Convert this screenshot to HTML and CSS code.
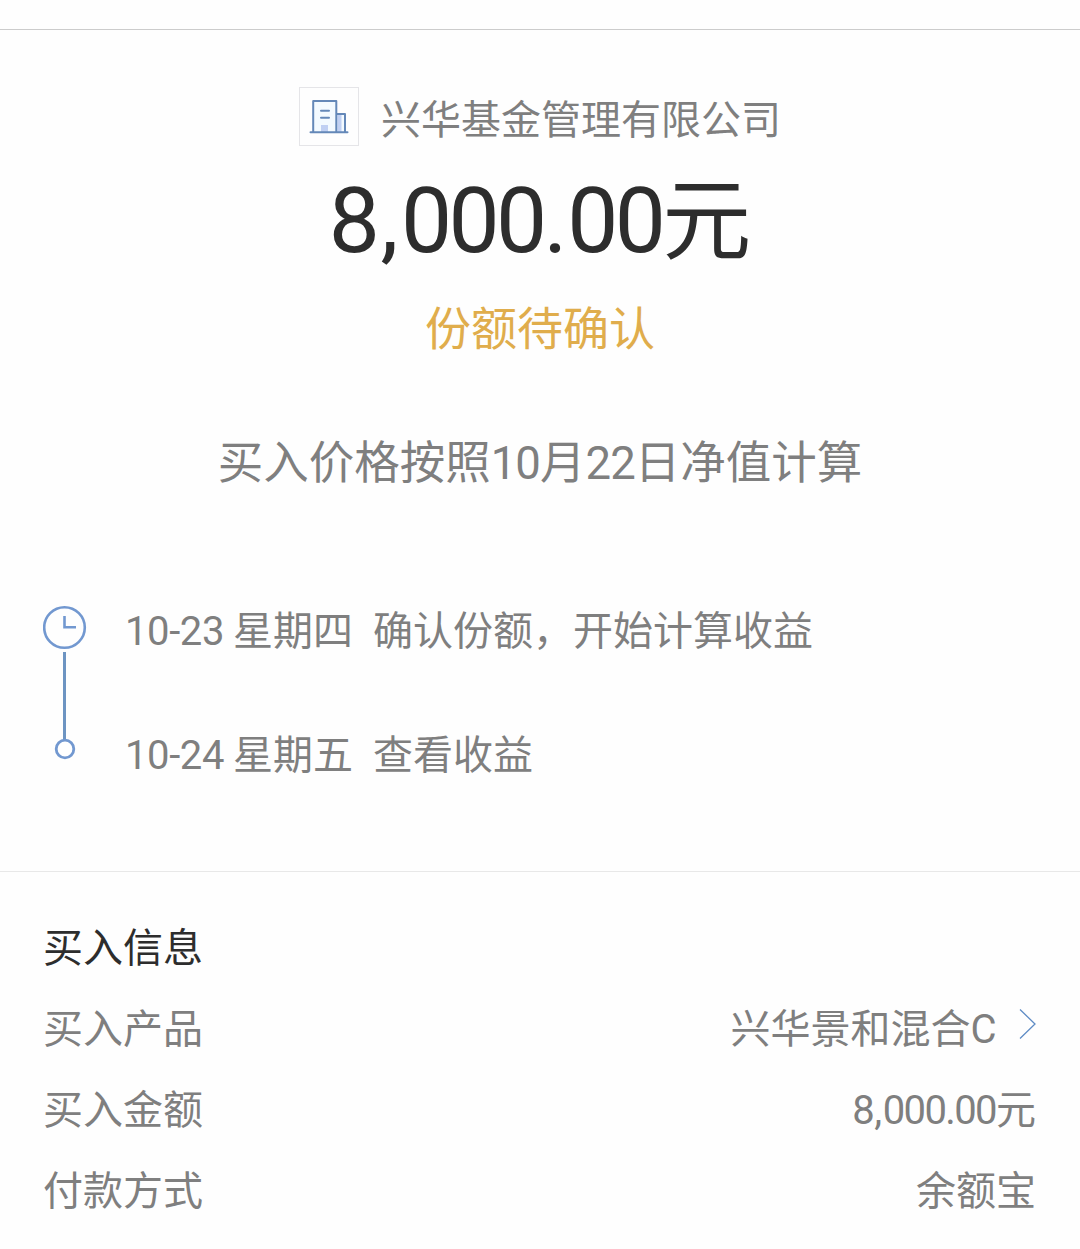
FILE: index.html
```html
<!DOCTYPE html>
<html lang="zh-CN">
<head>
    <meta charset="UTF-8">
    <meta name="viewport" content="width=device-width, initial-scale=1.0">
    <title>买入详情</title>
    <link rel="stylesheet" href="styles.css">
</head>
<body>
    <main class="page">
        <section class="summary">
            <div class="company">
                <span class="company-logo">
                    <svg width="40" height="36" viewBox="0 0 40 36">
                        <path d="M4 2h23v32H4zM27 15h9v19h-9z" fill="#f3faff"/>
                        <path d="M12 26h7v7h-7zM28.500 16h4v17h-4z" fill="#c0d0f3"/>
                        <path d="M4.200 33V2H27.300V33M27.300 15H36V33" fill="none" stroke="#6488b8" stroke-width="2" stroke-linejoin="round"/>
                        <path d="M1.500 33.300H38.500M12 11.800H20M12 18.800H20" stroke="#6488b8" stroke-width="2" stroke-linecap="round"/>
                    </svg>
                </span>
                <span class="company-name">兴华基金管理有限公司</span>
            </div>
            <h1 class="amount"><span class="num">8<span class="comma">,</span>000<span class="dot">.</span>00</span>元</h1>
            <p class="status">份额待确认</p>
            <p class="note">买入价格按照<span class="num">10</span>月<span class="num">22</span>日净值计算</p>
        </section>

        <section class="progress">
            <svg class="progress-line" width="44" height="156" viewBox="0 0 44 156">
                <circle cx="21.500" cy="22.500" r="20.300" fill="none" stroke="#7298d0" stroke-width="2.600"/>
                <path d="M21.500 11V22.300H33" fill="none" stroke="#7298d0" stroke-width="2.600"/>
                <path d="M21.500 47V135" stroke="#6d94c2" stroke-width="3"/>
                <circle cx="22" cy="144" r="8.800" fill="#fff" stroke="#7298d0" stroke-width="2.800"/>
            </svg>
            <ul class="steps">
                <li>
                    <span class="date"><span class="num">10-23</span> 星期四</span>
                    <span>确认份额，开始计算收益</span>
                </li>
                <li>
                    <span class="date"><span class="num">10-24</span> 星期五</span>
                    <span>查看收益</span>
                </li>
            </ul>
        </section>

        <section class="info">
            <h2>买入信息</h2>
            <div class="row">
                <span>买入产品</span>
                <a class="product">
                    <span>兴华景和混合<span class="num">C</span></span>
                    <svg class="arrow" width="18" height="32" viewBox="0 0 18 32">
                        <path d="M2 1.500L17 16L2 30.500" fill="none" stroke="#5f8cc5" stroke-width="1.300"/>
                    </svg>
                </a>
            </div>
            <div class="row">
                <span>买入金额</span>
                <span><span class="num">8<span class="comma">,</span>000<span class="dot">.</span>00</span>元</span>
            </div>
            <div class="row">
                <span>付款方式</span>
                <span>余额宝</span>
            </div>
        </section>
    </main>
</body>
</html>
```

FILE: styles.css
```css
* {
    box-sizing: border-box;
    margin: 0;
    padding: 0;
}
body {
    font-family: "Noto Sans CJK SC", sans-serif;
    font-size: 40px;
    line-height: 60px;
    color: #7f7f7f;
    background-color: #fefefe;
}
.page {
    height: 1249px;
    padding-top: 29px;
    overflow: hidden;
}
.num {
    font-family: Roboto, sans-serif;
    line-height: 1;
    letter-spacing: -0.04em;
}
.comma {
    margin: 0 0.05em 0 0.03em;
}
.summary {
    height: 542px;
    padding-top: 57px;
    border-top: 1px solid #ccc;
    text-align: center;
}
.company {
    display: flex;
    justify-content: center;
    height: 60px;
}
.company-logo {
    display: flex;
    align-items: center;
    justify-content: center;
    width: 60px;
    height: 59px;
    margin-right: 22px;
    border: 1px solid #e5e5e8;
}
.amount {
    height: 120px;
    margin-top: 7px;
    font-size: 89px;
    font-weight: 400;
    line-height: 120px;
    color: #2d2d2d;
}
.amount .num {
    font-size: 91px;
}
.amount .comma {
    margin: 0 0.07em 0 0.045em;
}
.amount .dot {
    margin: 0 0.035em 0 0;
}
.status {
    margin-top: 16px;
    font-size: 46px;
    line-height: 70px;
    color: #e0ad4c;
}
.note {
    margin-top: 64px;
    font-size: 45.5px;
    line-height: 70px;
}
.note .num {
    letter-spacing: -0.02em;
}
.progress {
    display: flex;
    height: 300px;
    padding: 34px 0 0 43px;
}
.progress-line {
    flex: none;
    margin-right: 38px;
}
.steps {
    display: flex;
    flex-direction: column;
    gap: 64px;
    margin-top: -7px;
    list-style: none;
}
.steps li {
    display: flex;
    gap: 20px;
    height: 60px;
}
.date .num {
    letter-spacing: -0.01em;
}
.info {
    padding: 43px 44px 0 43px;
    border-top: 1px solid #e8e8e8;
}
.info h2 {
    font-size: 40px;
    font-weight: 400;
    color: #2d2d2d;
}
.row {
    display: flex;
    justify-content: space-between;
    height: 60px;
    margin-top: 21px;
}
.product {
    display: flex;
    align-items: center;
}
.arrow {
    margin: -4px 0 0 23px;
}
```
